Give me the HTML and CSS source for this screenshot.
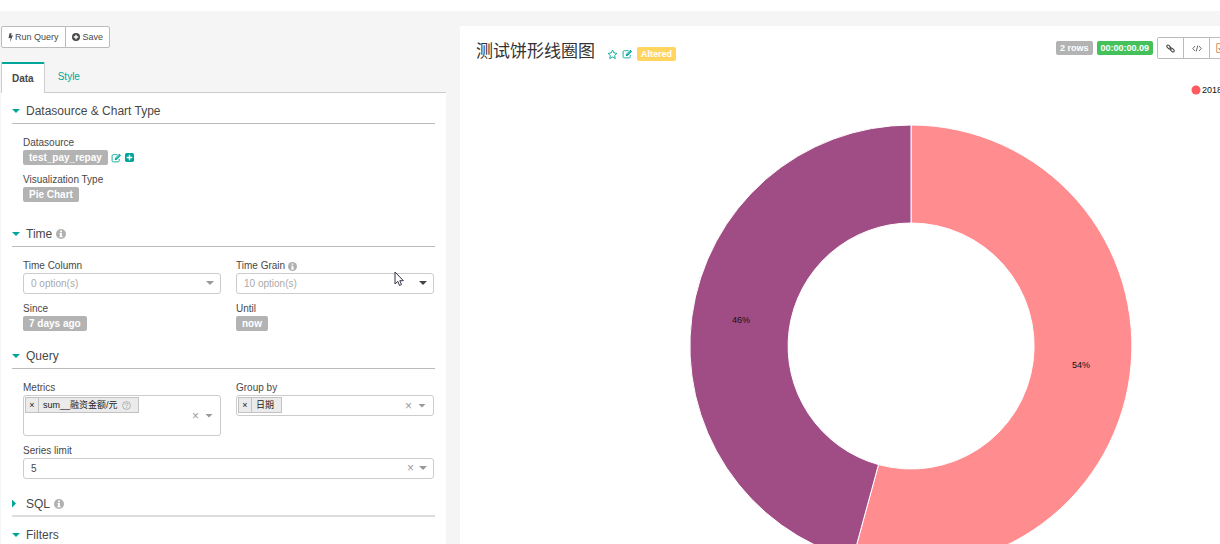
FILE: index.html
```html
<!DOCTYPE html>
<html lang="en">
<head>
<meta charset="utf-8">
<title>测试饼形线圈图</title>
<link rel="stylesheet" href="styles.css">
</head>
<body>
<svg class="defs" aria-hidden="true">
  <symbol id="edit" viewBox="0 0 20 18"><path d="M15 10.500v3.500a2 2 0 0 1-2 2H4a2 2 0 0 1-2-2V5a2 2 0 0 1 2-2h8" fill="none" stroke="currentColor" stroke-width="1.600"/><path d="M7 12.500V9.500L15.200 1.300l3 3L10 12.500z" fill="currentColor"/><path d="M9 9.800l6-6" stroke="#fff" stroke-width="1"/></symbol>
  <symbol id="info" viewBox="0 0 16 16"><circle cx="8" cy="8" r="8" fill="currentColor"/><path d="M6.500 2.500h3v2.500h-3zM5.500 6.500h4v5h1.200v1.700H5.300v-1.700h1.200V8.200h-1z" fill="#fff"/></symbol>
</svg>
<div class="page">
  <aside class="controls">
    <div class="btn-group">
      <button class="btn" type="button"><svg class="bolt" viewBox="0 0 8 14" aria-hidden="true"><path d="M2.500 0h3.500L4.600 4 8 3.300 3.200 14l1-6.800L.8 8z" fill="currentColor"/></svg>Run Query</button>
      <button class="btn save" type="button"><svg class="plus" viewBox="0 0 16 16" aria-hidden="true"><circle cx="8" cy="8" r="8" fill="currentColor"/><path d="M8 3.500v9M3.500 8h9" stroke="#fff" stroke-width="2.800"/></svg>Save</button>
    </div>
    <nav class="tabs">
      <a class="tab active" href="#data">Data</a>
      <a class="tab" href="#style">Style</a>
    </nav>
    <div class="panel" id="data">
      <section>
        <h2 class="head"><i class="caret"></i>Datasource &amp; Chart Type</h2>
        <div class="body tall">
          <div class="field">
            <span class="label">Datasource</span>
            <div class="line">
              <button class="badge" type="button">test_pay_repay</button>
              <a class="icon" href="#edit-source" aria-label="Edit datasource"><svg class="edit"><use href="#edit"/></svg></a>
              <a class="icon" href="#expand" aria-label="Expand"><svg class="square" viewBox="0 0 16 16"><rect width="16" height="16" rx="3" fill="currentColor"/><path d="M8 3v10M3 8h10" stroke="#fff" stroke-width="2.600"/></svg></a>
            </div>
          </div>
          <div class="field">
            <span class="label">Visualization Type</span>
            <div class="line"><button class="badge" type="button">Pie Chart</button></div>
          </div>
        </div>
      </section>
      <section>
        <h2 class="head"><i class="caret"></i>Time<svg class="info"><use href="#info"/></svg></h2>
        <div class="body two">
          <div class="field">
            <label class="label" for="column">Time Column</label>
            <div class="pick"><select id="column" class="empty"><option>0 option(s)</option></select><i class="arrow"></i></div>
          </div>
          <div class="field">
            <label class="label" for="grain">Time Grain<svg class="info small"><use href="#info"/></svg></label>
            <div class="pick"><select id="grain" class="empty"><option>10 option(s)</option></select><i class="arrow dark"></i>
              <svg class="cursor" viewBox="0 0 10 16" aria-hidden="true"><path d="M1 1v12l2.800-2.600L5.500 14.500l2-.9L5.800 9.700h3.600z" fill="#fff" stroke="#334" stroke-width="1"/></svg>
            </div>
          </div>
          <div class="field">
            <span class="label">Since</span>
            <div class="line"><button class="badge" type="button">7 days ago</button></div>
          </div>
          <div class="field">
            <span class="label">Until</span>
            <div class="line"><button class="badge" type="button">now</button></div>
          </div>
        </div>
      </section>
      <section>
        <h2 class="head"><i class="caret"></i>Query</h2>
        <div class="body two">
          <div class="field">
            <span class="label" id="metrics">Metrics</span>
            <div class="multi high" role="group" aria-labelledby="metrics">
              <span class="tag"><button class="x" type="button" aria-label="Remove metric">×</button><span class="value">sum__融资金额/元<svg class="help" viewBox="0 0 16 16"><circle cx="8" cy="8" r="7" fill="none" stroke="currentColor" stroke-width="1.500"/><path d="M5.500 6.300c0-3.300 5-3.300 5-.3 0 1.800-2.400 1.800-2.400 3.600M8.100 11v1.600" fill="none" stroke="currentColor" stroke-width="1.500"/></svg></span></span>
              <button class="clear" type="button" aria-label="Clear metrics">×</button><i class="arrow"></i>
            </div>
          </div>
          <div class="field">
            <span class="label" id="group">Group by</span>
            <div class="multi" role="group" aria-labelledby="group">
              <span class="tag"><button class="x" type="button" aria-label="Remove column">×</button><span class="value">日期</span></span>
              <button class="clear" type="button" aria-label="Clear group by">×</button><i class="arrow"></i>
            </div>
          </div>
          <div class="field wide">
            <label class="label" for="limit">Series limit</label>
            <div class="pick"><select id="limit"><option>5</option></select><button class="clear" type="button" aria-label="Clear series limit">×</button><i class="arrow"></i></div>
          </div>
        </div>
      </section>
      <section>
        <h2 class="head closed"><i class="caret"></i>SQL<svg class="info"><use href="#info"/></svg></h2>
      </section>
      <section>
        <h2 class="head"><i class="caret"></i>Filters</h2>
      </section>
    </div>
  </aside>
  <main class="result">
    <header class="top">
      <h1>测试饼形线圈图</h1>
      <div class="marks">
        <a class="icon" href="#favorite" aria-label="Favorite"><svg class="star" viewBox="0 0 18 18"><path d="M9 1.800l2.200 4.600 5 .7-3.600 3.500.9 5L9 13.200l-4.500 2.400.9-5L1.800 7.100l5-.7z" fill="none" stroke="currentColor" stroke-width="1.500"/></svg></a>
        <a class="icon" href="#edit-title" aria-label="Edit title"><svg class="edit"><use href="#edit"/></svg></a>
        <span class="badge mini altered">Altered</span>
      </div>
      <div class="actions">
        <span class="badge mini">2 rows</span>
        <span class="badge mini done">00:00:00.09</span>
        <div class="btn-group">
          <button class="btn square-btn" type="button" aria-label="Link"><svg class="link" viewBox="0 0 18 18" fill="none" stroke="currentColor" stroke-width="2.200"><rect x="1" y="3.500" width="9" height="5" rx="2.500" transform="rotate(45 5.500 6)"/><rect x="8" y="9.500" width="9" height="5" rx="2.500" transform="rotate(45 12.500 12)"/><path d="M7 7l4 4"/></svg></button>
          <button class="btn square-btn" type="button" aria-label="Embed"><svg class="code" viewBox="0 0 20 14" fill="none" stroke="currentColor" stroke-width="1.600"><path d="M6 2L1.500 7 6 12M14 2l4.500 5-4.500 5M11.500 1l-3 12"/></svg></button>
          <button class="btn export" type="button" aria-label="Export"><svg class="file" viewBox="0 0 14 16" fill="none" stroke="#e08a4a" stroke-width="1.500"><path d="M1 1h8l4 4v10H1z"/><path d="M4 8l3 4 3-4" stroke="#666"/></svg></button>
        </div>
      </div>
    </header>
    <svg class="chart" viewBox="0 0 902 520" role="img" aria-label="Pie chart">
      <g stroke="#fff" stroke-width="1">
        <path d="M451 47A221 221 0 1 1 392.700 481.200L418.500 386.600A123 123 0 1 0 451 145z" fill="#ff8c8f"/>
        <path d="M451 47A221 221 0 0 0 392.700 481.200L418.500 386.600A123 123 0 0 1 451 145z" fill="#a14d85"/>
      </g>
      <text x="281" y="245" text-anchor="middle">46%</text>
      <text x="621" y="290" text-anchor="middle">54%</text>
      <circle cx="736" cy="12" r="4.500" fill="#ff5a5f"/>
      <text x="742" y="15">2018</text>
    </svg>
  </main>
</div>
</body>
</html>
```
FILE: styles.css
```css
* { box-sizing: border-box; }
body {
  height: 100vh;
  margin: 0;
  overflow: hidden;
  background: #f5f5f5;
  border-top: 11px solid #fff;
  color: #484848;
  font: 10px/14px "Liberation Sans", "Noto Sans CJK SC", sans-serif;
}
button, select { font: inherit; color: inherit; margin: 0; }
h1, h2 { margin: 0; font-weight: 400; }
a { color: #00a699; text-decoration: none; }
svg { display: block; flex: none; }
.defs { position: absolute; width: 0; height: 0; }

/* The workspace keeps room for the whole chart and is clipped in narrow windows. */
.page {
  display: grid;
  grid-template-columns: 445px 1fr;
  gap: 14px;
  min-width: 1362px;
  padding: 15px 0 0 1px;
}

.btn-group { display: flex; }
.btn {
  display: flex;
  align-items: center;
  justify-content: center;
  gap: 2px;
  height: 22px;
  padding: 0 6px;
  border: 1px solid #bbb;
  background: #fff;
  font-size: 9px;
}
.btn + .btn { margin-left: -1px; }
.btn:first-child { border-radius: 2px 0 0 2px; }
.btn:last-child { border-radius: 0 2px 2px 0; }
.save { gap: 3px; }
.bolt { width: 5px; height: 9px; }
.plus { width: 8px; height: 8px; }

.tabs { display: flex; margin-top: 14px; border-bottom: 1px solid #ccc; }
.tab { height: 30px; padding: 8px 13px; }
.tab.active {
  height: 31px;
  margin-bottom: -1px;
  padding: 6px 10px;
  border: 1px solid #ccc;
  border-top: 2px solid #00a699;
  border-bottom: 0;
  border-radius: 2px 2px 0 0;
  background: #fff;
  color: #484848;
  font-weight: 700;
  line-height: 18px;
}

.panel { padding: 6px 11px 20px; background: #fff; }
.head {
  display: flex;
  align-items: center;
  height: 25px;
  border-bottom: 1px solid #bbb;
  font-size: 12px;
}
.caret {
  width: 14px;
  height: 4px;
  background: #00a699;
  clip-path: polygon(0 0, 8px 0, 4px 4px);
}
.closed { margin-bottom: 6px; border-bottom: 2px solid #ddd; }
.closed .caret { height: 8px; clip-path: polygon(0 0, 4px 4px, 0 8px); }
.info { width: 10px; height: 10px; margin-left: 4px; color: #b0b0b0; }
.info.small { width: 9px; height: 9px; margin-left: 3px; }

.body { display: grid; gap: 8px 15px; padding: 12px 1px 13px 11px; }
.tall { padding-bottom: 20px; }
.two { grid-template-columns: 1fr 1fr; }
.wide { grid-column: 1 / -1; }
.label { display: flex; align-items: center; }
.line { display: flex; align-items: center; gap: 3px; }
.badge {
  height: 15px;
  padding: 0 6px;
  border: 0;
  border-radius: 2px;
  background: #b3b3b3;
  color: #fff;
  font-weight: 700;
  line-height: 15px;
}
.mini { height: 14px; padding: 0 4px; font-size: 9px; line-height: 14px; }
.altered { background: #ffd55f; }
.done { background: #44c15b; }
.icon { color: #00a699; }
.edit { width: 11px; height: 10px; }
.square { width: 9px; height: 9px; }
.star { width: 11px; height: 11px; }

.pick { position: relative; }
.pick select {
  display: block;
  appearance: none;
  width: 100%;
  height: 21px;
  padding: 0 7px;
  border: 1px solid #ccc;
  border-radius: 3px;
  background: #fff;
}
.pick .empty { color: #aaa; }
.arrow {
  width: 8px;
  height: 4px;
  background: #999;
  clip-path: polygon(0 0, 100% 0, 50% 100%);
}
.arrow.dark { background: #444; }
.clear { padding: 0; border: 0; background: none; color: #999; font-size: 12px; line-height: 12px; }
.pick .arrow { position: absolute; right: 7px; top: 8px; }
.pick .clear { position: absolute; right: 20px; top: 4px; }
.cursor { position: absolute; right: 30px; top: -2px; width: 10px; height: 16px; }

.multi {
  display: flex;
  align-items: center;
  gap: 6px;
  height: 21px;
  padding: 0 7px 0 1px;
  border: 1px solid #ccc;
  border-radius: 3px;
}
.multi.high { height: 41px; }
.tag {
  display: flex;
  align-self: flex-start;
  height: 16px;
  margin: 1px auto 0 0;
  border: 1px solid #c2c2c2;
  background: #ebebeb;
  color: #222;
  font-size: 9px;
}
.x { width: 13px; padding: 0; border: 0; border-right: 1px solid #c2c2c2; background: none; line-height: 12px; }
.value { display: flex; align-items: center; gap: 4px; padding: 0 7px 0 4px; }
.help { width: 9px; height: 9px; color: #aaa; }

.result { background: #fff; }
.top { display: flex; height: 42px; padding: 11px 15px 0 16px; }
.top h1 { color: #333; font-size: 17px; font-weight: 400; line-height: 30px; }
.marks { display: flex; align-items: center; gap: 4px; height: 34px; margin-left: 12px; }
.actions { display: flex; align-items: center; gap: 4px; width: 291px; height: 22px; margin-left: auto; }
.square-btn { width: 27px; }
.link { width: 9px; height: 9px; }
.code { width: 10px; height: 7px; }
.file { width: 9px; height: 10px; }
.chart { width: 100%; margin-top: 10px; font-size: 9px; fill: #111; }
```
